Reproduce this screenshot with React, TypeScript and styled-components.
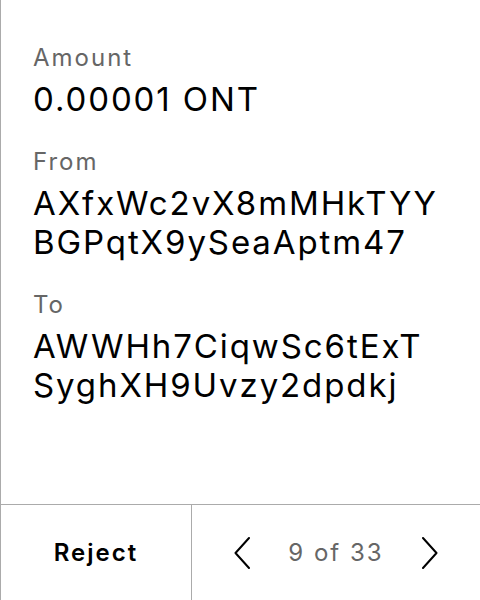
import React from "react";
import styled, { createGlobalStyle } from "styled-components";

const Global = createGlobalStyle`
  html, body { margin: 0; padding: 0; background: #fff; }
  body { font-family: Inter, "Noto Sans", sans-serif; }
`;

const Screen = styled.div`
  width: 480px;
  height: 600px;
  box-sizing: border-box;
  border-left: 1px solid #ababab;
  display: flex;
  flex-direction: column;
  background: #fff;
`;

const Content = styled.div`
  flex: 1;
  padding: 43px 10px 0 32px;
  display: flex;
  flex-direction: column;
  gap: 28px;
`;

const Field = styled.div`
  display: flex;
  flex-direction: column;
  gap: 7px;
`;

const Label = styled.div`
  font-size: 24px;
  line-height: 30px;
  letter-spacing: 2px;
  color: #666;
`;

const Value = styled.div`
  font-size: 33px;
  line-height: 39px;
  letter-spacing: 1.9px;
  color: #000;
  white-space: nowrap;
`;

const Footer = styled.div`
  height: 96px;
  box-sizing: border-box;
  border-top: 1px solid #ababab;
  display: grid;
  grid-template-columns: 191px 1fr;
`;

const RejectCell = styled.button`
  all: unset;
  display: flex;
  align-items: center;
  justify-content: center;
  border-right: 1px solid #ababab;
  font-family: Inter, sans-serif;
  font-size: 24px;
  font-weight: 600;
  letter-spacing: 2px;
  color: #000;
`;

const Pager = styled.div`
  display: flex;
  align-items: center;
  justify-content: center;
  gap: 38px;
`;

const PageText = styled.span`
  font-size: 24px;
  letter-spacing: 2px;
  color: #666;
`;

const Chevron = ({ dir }: { dir: "left" | "right" }) => (
  <svg width="16" height="32" viewBox="0 0 16 32" fill="none">
    <path
      d={dir === "left" ? "M15 1 L1.5 16 L15 31" : "M1 1 L14.5 16 L1 31"}
      stroke="#000"
      strokeWidth="2"
      strokeLinecap="round"
      strokeLinejoin="round"
    />
  </svg>
);

export default function App() {
  return (
    <>
      <Global />
      <Screen>
        <Content>
          <Field>
            <Label>Amount</Label>
            <Value>0.00001 ONT</Value>
          </Field>
          <Field>
            <Label>From</Label>
            <Value>
              AXfxWc2vX8mMHkTYY
              <br />
              BGPqtX9ySeaAptm47
            </Value>
          </Field>
          <Field>
            <Label>To</Label>
            <Value>
              AWWHh7CiqwSc6tExT
              <br />
              SyghXH9Uvzy2dpdkj
            </Value>
          </Field>
        </Content>
        <Footer>
          <RejectCell>Reject</RejectCell>
          <Pager>
            <Chevron dir="left" />
            <PageText>9 of 33</PageText>
            <Chevron dir="right" />
          </Pager>
        </Footer>
      </Screen>
    </>
  );
}
